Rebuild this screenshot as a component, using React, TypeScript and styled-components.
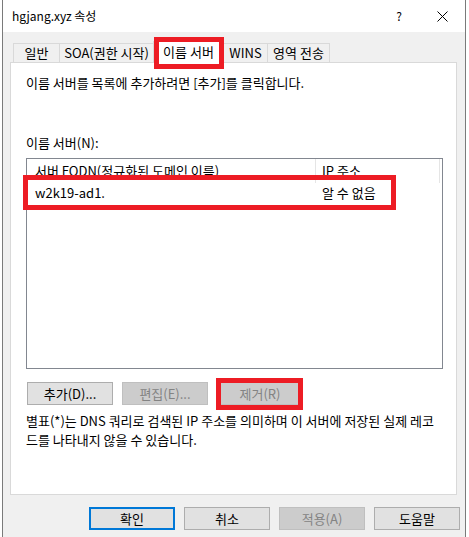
import React from "react";
import styled, { createGlobalStyle } from "styled-components";

const FONT = `"Noto Sans CJK KR", "Noto Sans", sans-serif`;
const RED = "#ed1c24";

const GlobalStyle = createGlobalStyle`
  html, body { margin: 0; padding: 0; background: #ffffff; }
  body { font-family: ${FONT}; font-size: 13px; color: #000; }
  * { box-sizing: border-box; }
`;

const Window = styled.div`
  margin-left: 2px;
  width: 464px;
  height: 537px;
  border-left: 1px solid #7a7a7a;
  border-right: 1px solid #7a7a7a;
  display: flex;
  flex-direction: column;
  overflow: hidden;
`;

const TitleBar = styled.div`
  height: 32px;
  background: #ffffff;
  display: flex;
  align-items: center;
  padding-left: 9px;
  flex-shrink: 0;
`;

const TitleText = styled.div`
  flex: 1;
  line-height: 16px;
  font-size: 12px;
`;

const CaptionButton = styled.div<{ $w: number }>`
  width: ${(p) => p.$w}px;
  height: 32px;
  display: flex;
  align-items: center;
  justify-content: center;
  font-size: 12px;
  line-height: 16px;
`;

const Body = styled.div`
  flex: 1;
  background: #f0f0f0;
  padding: 9px 0 0 7px;
  display: flex;
  flex-direction: column;
`;

const TabStrip = styled.div`
  height: 21px;
  display: flex;
  align-items: flex-end;
  padding-left: 3px;
  position: relative;
  z-index: 1;
`;

const Tab = styled.div<{ $w: number; $active?: boolean }>`
  position: relative;
  width: ${(p) => p.$w}px;
  height: ${(p) => (p.$active ? 22 : 19)}px;
  margin-left: -1px;
  margin-bottom: ${(p) => (p.$active ? -1 : 0)}px;
  background: ${(p) => (p.$active ? "#ffffff" : "#f0f0f0")};
  border: 1px solid #d9d9d9;
  border-bottom: none;
  z-index: ${(p) => (p.$active ? 2 : 1)};
  display: flex;
  align-items: ${(p) => (p.$active ? "flex-start" : "center")};
  padding-top: ${(p) => (p.$active ? 2 : 0)}px;
  justify-content: center;
  line-height: 16px;
  white-space: nowrap;
  &:first-child { margin-left: 0; }
`;

const Highlight = styled.div<{ $l: number; $t: number; $w: number; $h: number }>`
  position: absolute;
  left: ${(p) => p.$l}px;
  top: ${(p) => p.$t}px;
  width: ${(p) => p.$w}px;
  height: ${(p) => p.$h}px;
  border: 5px solid ${RED};
  pointer-events: none;
  z-index: 5;
`;

const Panel = styled.div`
  width: 447px;
  height: 433px;
  background: #ffffff;
  border: 1px solid #d9d9d9;
  padding: 12px 0 0 15px;
  display: flex;
  flex-direction: column;
`;

const Text = styled.div<{ $mt?: number }>`
  line-height: 16px;
  margin-top: ${(p) => p.$mt ?? 0}px;
  white-space: nowrap;
`;

const ListBox = styled.div`
  position: relative;
  margin-top: 7px;
  width: 417px;
  height: 211px;
  border: 1px solid #828790;
  background: #ffffff;
`;

const ListHeader = styled.div`
  display: flex;
  height: 24px;
`;

const HeaderCell = styled.div<{ $w: number; $pl: number }>`
  width: ${(p) => p.$w}px;
  padding-left: ${(p) => p.$pl}px;
  border-right: 1px solid #e5e5e5;
  line-height: 24px;
  white-space: nowrap;
  overflow: hidden;
`;

const ListRow = styled.div`
  display: flex;
  height: 20px;
  align-items: center;
`;

const Cell = styled.div<{ $w: number; $pl: number }>`
  width: ${(p) => p.$w}px;
  padding-left: ${(p) => p.$pl}px;
  line-height: 20px;
  white-space: nowrap;
`;

const ButtonRow = styled.div`
  display: flex;
  gap: 9px;
  margin-top: 13px;
  margin-left: 1px;
`;

const Button = styled.div<{ $disabled?: boolean; $default?: boolean }>`
  position: relative;
  width: 86px;
  height: 23px;
  display: flex;
  align-items: center;
  justify-content: center;
  line-height: 16px;
  background: ${(p) => (p.$disabled ? "#cccccc" : "#e1e1e1")};
  color: ${(p) => (p.$disabled ? "#838383" : "#000000")};
  border: ${(p) =>
    p.$default ? "2px solid #0078d7" : p.$disabled ? "1px solid #bfbfbf" : "1px solid #adadad"};
  white-space: nowrap;
`;

const Footnote = styled.div`
  margin-top: 6px;
  display: flex;
  flex-direction: column;
`;

const FootLine = styled.div`
  line-height: 19px;
  white-space: nowrap;
`;

const Footer = styled.div`
  display: flex;
  justify-content: flex-end;
  gap: 9px;
  margin-top: 12px;
  padding-right: 5px;
`;

const CloseIcon = () => (
  <svg width="11" height="11" viewBox="0 0 11 11">
    <path d="M0.5 0.5 L10.5 10.5 M10.5 0.5 L0.5 10.5" stroke="#000" strokeWidth="1" fill="none" />
  </svg>
);

export default function App() {
  return (
    <>
      <GlobalStyle />
      <Window>
        <TitleBar>
          <TitleText>hgjang.xyz 속성</TitleText>
          <CaptionButton $w={40}>?</CaptionButton>
          <CaptionButton $w={46}>
            <CloseIcon />
          </CaptionButton>
        </TitleBar>
        <Body>
          <TabStrip>
            <Tab $w={47}>일반</Tab>
            <Tab $w={95}>SOA(권한 시작)</Tab>
            <Tab $w={71} $active>
              이름 서버
              <Highlight $l={0} $t={-5} $w={70} $h={32} />
            </Tab>
            <Tab $w={45}>WINS</Tab>
            <Tab $w={63}>영역 전송</Tab>
          </TabStrip>
          <Panel>
            <Text>이름 서버를 목록에 추가하려면 [추가]를 클릭합니다.</Text>
            <Text $mt={44}>이름 서버(N):</Text>
            <ListBox>
              <ListHeader>
                <HeaderCell $w={289} $pl={8}>서버 FQDN(정규화된 도메인 이름)</HeaderCell>
                <HeaderCell $w={124} $pl={6}>IP 주소</HeaderCell>
              </ListHeader>
              <ListRow>
                <Cell $w={289} $pl={8}>w2k19-ad1.</Cell>
                <Cell $w={124} $pl={6}>알 수 없음</Cell>
              </ListRow>
              <Highlight $l={-4} $t={16} $w={373} $h={35} />
            </ListBox>
            <ButtonRow>
              <Button>추가(D)...</Button>
              <Button $disabled>편집(E)...</Button>
              <Button $disabled>
                제거(R)
                <Highlight $l={-2} $t={-5} $w={87} $h={32} />
              </Button>
            </ButtonRow>
            <Footnote>
              <FootLine>별표(*)는 DNS 쿼리로 검색된 IP 주소를 의미하며 이 서버에 저장된 실제 레코</FootLine>
              <FootLine>드를 나타내지 않을 수 있습니다.</FootLine>
            </Footnote>
          </Panel>
          <Footer>
            <Button $default>확인</Button>
            <Button>취소</Button>
            <Button $disabled>적용(A)</Button>
            <Button>도움말</Button>
          </Footer>
        </Body>
      </Window>
    </>
  );
}
